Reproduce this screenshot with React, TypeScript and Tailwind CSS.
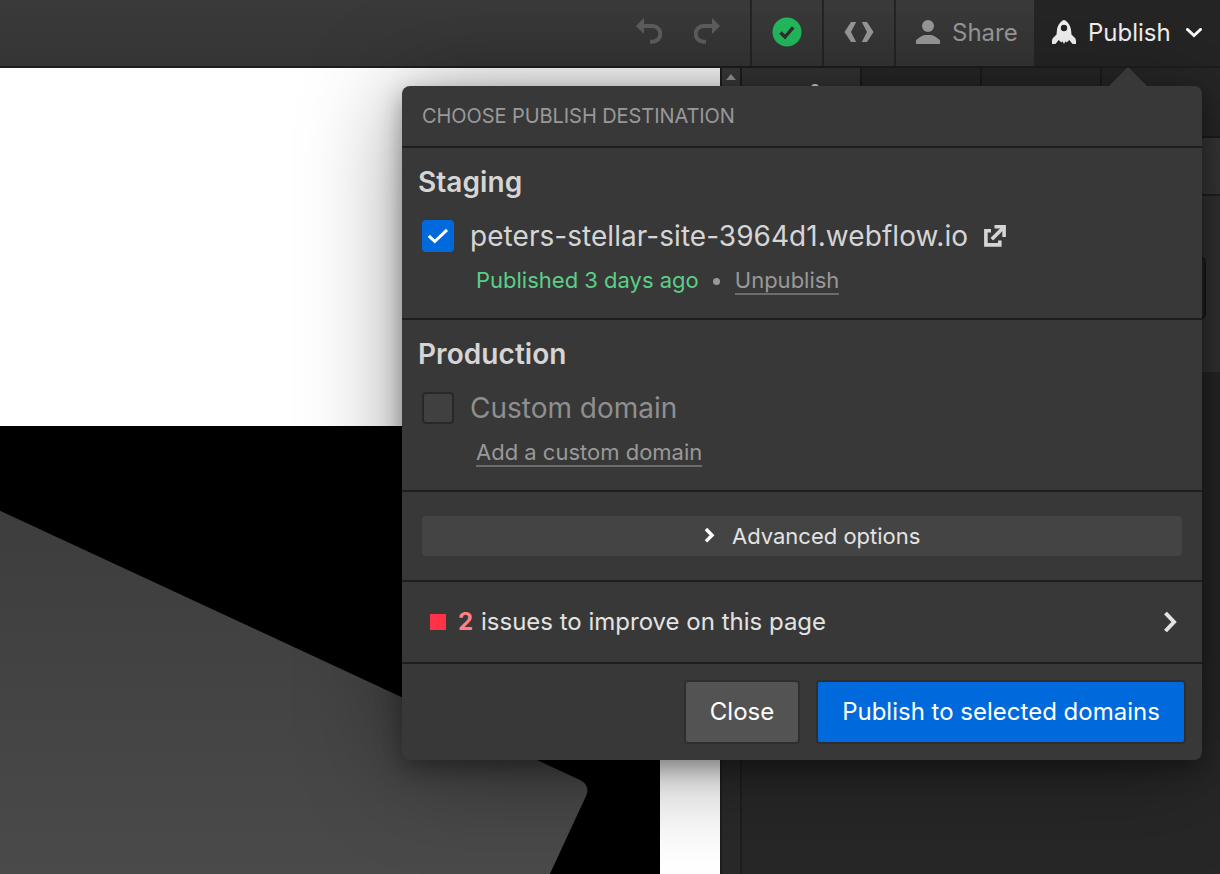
import type { ReactNode } from "react";

function UndoIcon({ flip = false }: { flip?: boolean }) {
  return (
    <svg width="26" height="27" viewBox="0 0 26 27" className={flip ? "-scale-x-100" : ""}>
      <path d="M0 8 8 0V16Z" fill="#5e5e5e" />
      <path d="M7 8H16.5a7.8 7.8 0 0 1 0 15.7H14" fill="none" stroke="#5e5e5e" strokeWidth="4" />
    </svg>
  );
}

function StatusIcon() {
  return (
    <svg width="30" height="30" viewBox="0 0 30 30">
      <circle cx="15" cy="15" r="14.5" fill="#23bb5e" />
      <path d="M8.500 15.500 13 20 21.200 10.400" fill="none" stroke="#303030" strokeWidth="3.400" />
    </svg>
  );
}

function CodeIcon() {
  return (
    <svg width="30" height="20" viewBox="0 0 30 20" fill="#999">
      <path d="M7 0h5.200L7 10l5.200 10H7L.5 10Z" />
      <path d="M23 0h-5.200L23 10l-5.200 10H23l6.500-10Z" />
    </svg>
  );
}

function PersonIcon() {
  return (
    <svg width="24" height="24" viewBox="0 0 24 24" fill="#999">
      <circle cx="12" cy="6" r="6" />
      <path d="M0 24v-3c0-1 .8-1.700 1.700-2.200C4.800 16.700 7.500 15 9 15h6c1.500 0 4.200 1.700 7.300 3.800.9.500 1.700 1.200 1.700 2.200v3Z" />
    </svg>
  );
}

function RocketIcon() {
  return (
    <svg width="24" height="24" viewBox="0 0 24 24" fill="#f4f4f4">
      <path
        fillRule="evenodd"
        d="M12 0c1.500 0 6.800 4 7.200 11.500l.3 3L22.500 17.500c1.200 1.200 1.500 2 1.500 3.500v3h-3.500L17.300 20l-2.600 2.500-1.200-1.200L12 24l-1.500-2.700-1.200 1.200L6.700 20 3.500 24H0v-3c0-1.500.3-2.300 1.500-3.500L4.500 14.500l.3-3C5.200 4 10.500 0 12 0Zm0 4.800a3.200 3.200 0 1 0 0 6.400 3.200 3.200 0 0 0 0-6.400Z"
      />
    </svg>
  );
}

function ExternalIcon() {
  return (
    <svg width="22" height="22" viewBox="0 0 22 22" fill="none" stroke="#d5d5d5" strokeWidth="3.600">
      <path d="M7 5.800H1.900V19.900H15.800V15.500" />
      <path d="M7.800 14.300 18.500 3.600" />
      <path d="M10.500 1.800H20.100V12" />
    </svg>
  );
}

function Link({ children }: { children: ReactNode }) {
  return (
    <a className="h-7 border-b-2 border-[#6c6c6c] text-[22px] leading-[26px] text-[#999]">
      {children}
    </a>
  );
}

function Toolbar() {
  return (
    <header className="flex h-[68px] shrink-0 items-stretch border-b-2 border-[#1e1e1e] bg-linear-to-b from-[#3a3a3a] to-[#353535] text-[24px]">
      <div className="flex flex-1 items-center justify-end gap-8 pr-[30px] pb-[3px]">
        <UndoIcon />
        <UndoIcon flip />
      </div>
      <div className="flex w-[72px] items-center justify-center border-l-2 border-[#242424] pb-[2px]">
        <StatusIcon />
      </div>
      <div className="flex w-[72px] items-center justify-center border-l-2 border-[#242424] pb-[2px]">
        <CodeIcon />
      </div>
      <div className="flex w-[140px] items-center gap-3 border-l-2 border-[#242424] pb-[2px] pl-5 text-[#999]">
        <PersonIcon />
        <span className="pt-[2px]">Share</span>
      </div>
      <div className="flex w-[186px] items-center bg-[#252525] pb-[2px] pl-[18px] text-[#f4f4f4]">
        <RocketIcon />
        <span className="ml-3 pt-[2px]">Publish</span>
        <svg width="16" height="10" viewBox="0 0 16 10" className="mt-px ml-[15px]">
          <path d="M1.500 1.500 8 7.500l6.500-6" fill="none" stroke="#fff" strokeWidth="3" strokeLinecap="round" />
        </svg>
      </div>
    </header>
  );
}

function Canvas() {
  return (
    <main className="flex w-[720px] flex-col bg-white">
      <div className="h-[358px] shrink-0" />
      <div className="w-[660px] flex-1 bg-black">
        <svg width="660" height="448" viewBox="0 0 660 448" className="block">
          <defs>
            <linearGradient id="slab" x1="0" y1="0" x2="0" y2="1">
              <stop offset="0" stopColor="#3d3d3d" />
              <stop offset="1" stopColor="#4a4a4a" />
            </linearGradient>
          </defs>
          <path d="M-10 80 580 354Q590 359 586.500 369L548 452H-10Z" fill="url(#slab)" />
        </svg>
      </div>
    </main>
  );
}

function SidePanel() {
  return (
    <aside className="flex flex-1">
      <div className="flex w-[22px] shrink-0 justify-center border-x-2 border-[#1e1e1e] bg-[#292929]">
        <svg width="18" height="20" viewBox="0 0 18 20" className="bg-[#3b3b3b]">
          <path d="M4 12 9 6l5 6Z" fill="#999" />
        </svg>
      </div>
      <div className="flex flex-1 flex-col bg-[#272727]">
        <div className="flex h-[70px] shrink-0 border-b-2 border-[#1c1c1c]">
          <div className="flex w-[120px] justify-center border-r-2 border-[#1c1c1c] bg-[#343434] pt-4 pl-7">
            <span className="size-2 rounded-full bg-[#ddd]" />
          </div>
          <div className="w-[120px] border-r-2 border-[#1c1c1c]" />
          <div className="w-[120px] border-r-2 border-[#1c1c1c]" />
        </div>
        <div className="h-[58px] shrink-0 border-b-2 border-[#202020] bg-[#383838]" />
        <div className="h-[176px] shrink-0 bg-[#343434] pt-[60px] pr-[14px]">
          <div className="h-16 rounded-md border-2 border-[#1a1a1a] bg-[#242424]" />
        </div>
      </div>
    </aside>
  );
}

function PublishPopover() {
  return (
    <section className="absolute top-[86px] left-[402px] w-[800px] rounded-[8px] bg-[#383838] shadow-[0_8px_100px_rgba(0,0,0,0.4),0_8px_24px_rgba(0,0,0,0.35)]">
      <svg width="40" height="20" viewBox="0 0 40 20" className="absolute -top-[19px] left-[706px]">
        <path d="M0 20 20 0l20 20Z" fill="#383838" />
      </svg>
      <div className="flex h-[62px] items-center border-b-2 border-[#1e1e1e] pl-5 text-[20px] tracking-[-0.07px] text-[#999]">
        <h1>CHOOSE PUBLISH DESTINATION</h1>
      </div>

      <div className="flex h-[172px] flex-col border-b-2 border-[#1e1e1e] pt-4">
        <h2 className="pl-4 text-[28px] leading-9 font-semibold tracking-[0.06px] text-[#d5d5d5]">Staging</h2>
        <div className="mt-5 flex h-8 items-center pl-5">
          <span className="flex size-8 items-center justify-center rounded-[4px] bg-[#006adc]">
            <svg width="22" height="16" viewBox="0 0 22 16">
              <path d="M1.800 7.800 7.800 13.500 20 1.800" fill="none" stroke="#fff" strokeWidth="3" />
            </svg>
          </span>
          <span className="ml-4 text-[28px] tracking-[0.05px] text-[#d5d5d5]">peters-stellar-site-3964d1.webflow.io</span>
          <span className="ml-4"><ExternalIcon /></span>
        </div>
        <div className="mt-[15px] flex items-start pl-[74px]">
          <span className="text-[22px] leading-[26px] text-[#5bcf87]">Published 3 days ago</span>
          <span className="mx-[14.5px] mt-[11px] size-[7px] rounded-full bg-[#999]" />
          <Link>Unpublish</Link>
        </div>
      </div>

      <div className="flex h-[172px] flex-col border-b-2 border-[#1e1e1e] pt-4">
        <h2 className="pl-4 text-[28px] leading-9 font-semibold tracking-[0.06px] text-[#d5d5d5]">Production</h2>
        <div className="mt-5 flex h-8 items-center pl-5">
          <span className="size-8 rounded-[4px] border-2 border-[#282828] bg-[#404040]" />
          <span className="ml-4 text-[28px] text-[#8f8f8f]">Custom domain</span>
        </div>
        <div className="mt-[15px] flex items-start pl-[74px]">
          <Link>Add a custom domain</Link>
        </div>
      </div>

      <div className="h-[90px] border-b-2 border-[#1e1e1e] px-5 pt-6">
        <button className="flex h-10 w-full items-center rounded-[4px] bg-[#444] pl-[282px] text-[22px] text-[#e3e3e3]">
          <svg width="12" height="18" viewBox="0 0 12 18">
            <path d="M2 2 8 8.200 2 14.400" fill="none" stroke="#fff" strokeWidth="3.500" />
          </svg>
          <span className="ml-4">Advanced options</span>
        </button>
      </div>

      <div className="flex h-[82px] items-center border-b-2 border-[#1e1e1e] pr-[25px] pl-7 text-[24px] text-[#e3e3e3]">
        <span className="size-4 bg-[#ff3347]" />
        <span className="ml-3 w-[15px] font-bold text-[#ff8087]">2</span>
        <span className="ml-2 flex-1">issues to improve on this page</span>
        <svg width="14" height="22" viewBox="0 0 14 22">
          <path d="M2.500 2 11 11 2.500 20" fill="none" stroke="#e3e3e3" strokeWidth="4" />
        </svg>
      </div>

      <div className="flex h-24 items-center justify-end gap-4 pr-4 text-[24px] text-white">
        <button className="h-16 w-[116px] rounded-[4px] border-2 border-[#2e2e2e] bg-[#535353]">Close</button>
        <button className="h-16 w-[370px] rounded-[4px] border-2 border-[#2e2e2e] bg-[#006adc]">
          Publish to selected domains
        </button>
      </div>
    </section>
  );
}

export default function App() {
  return (
    <div className="relative flex h-[874px] w-[1220px] flex-col overflow-hidden whitespace-nowrap font-['Inter',sans-serif]">
      <Toolbar />
      <div className="flex min-h-0 flex-1">
        <Canvas />
        <SidePanel />
      </div>
      <PublishPopover />
    </div>
  );
}
